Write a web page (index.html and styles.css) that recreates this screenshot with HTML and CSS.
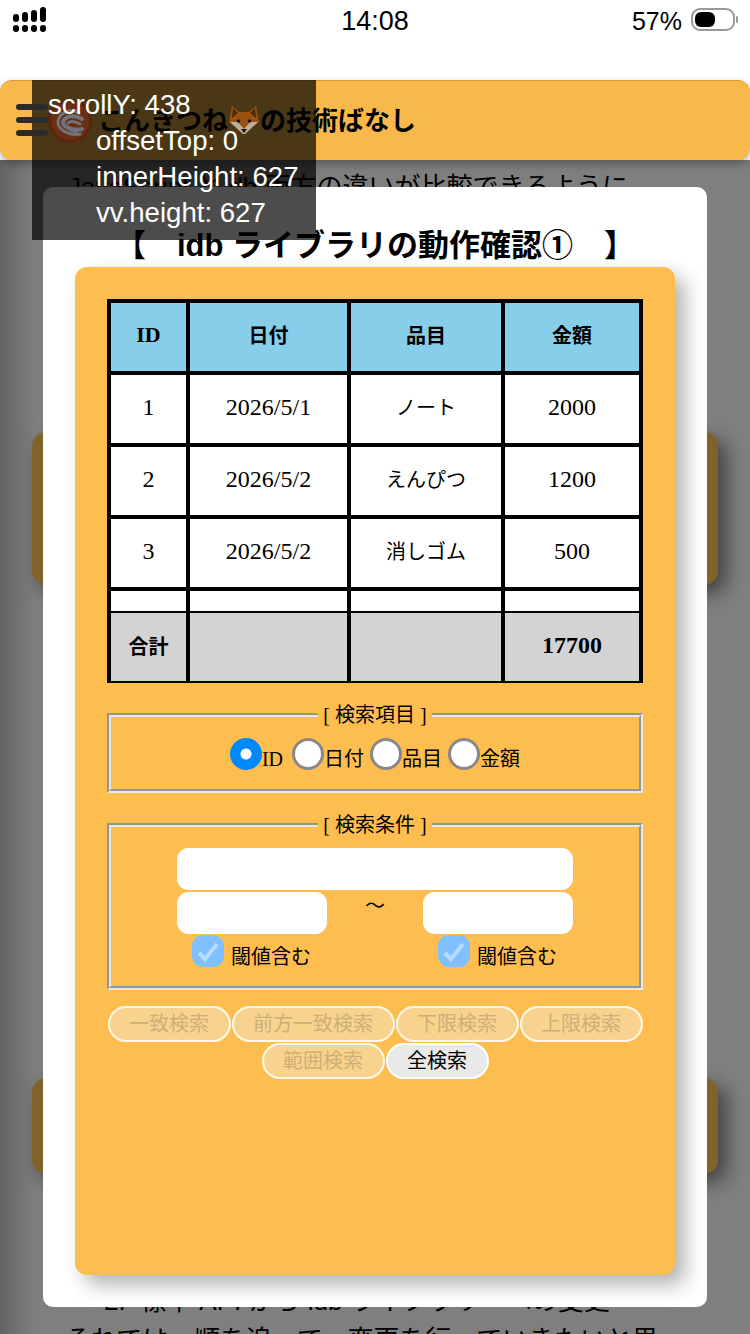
FILE: index.html
```html
<!DOCTYPE html>
<html lang="ja">
<head>
    <meta charset="UTF-8">
    <meta name="viewport" content="width=device-width, initial-scale=1.0">
    <title>idb ライブラリの動作確認</title>
    <link rel="stylesheet" href="styles.css">
</head>
<body>

    <!-- Status bar -->
    <div class="status-bar">
        <svg class="signal" width="34" height="26" viewBox="0 0 34 26">
            <rect x="0" y="8" width="6" height="8" rx="3"/>
            <rect x="9" y="6" width="6" height="10" rx="3"/>
            <rect x="18" y="4" width="6" height="12" rx="3"/>
            <rect x="27" y="1" width="6" height="15" rx="3"/>
            <rect x="0" y="19" width="6" height="7" rx="3"/>
            <rect x="9" y="19" width="6" height="7" rx="3"/>
            <rect x="18" y="19" width="6" height="7" rx="3"/>
            <rect x="27" y="19" width="6" height="7" rx="3"/>
        </svg>
        <span class="clock">14:08</span>
        <div class="battery-wrap">
            <span class="percent">57%</span>
            <svg width="48" height="26" viewBox="0 0 48 26">
                <rect x="1" y="2" width="42" height="21" rx="8" fill="none" stroke="#999" stroke-width="2"/>
                <rect x="4" y="5" width="20" height="15" rx="6" fill="#000"/>
                <rect x="45" y="9" width="2" height="7" rx="1" fill="#999"/>
            </svg>
        </div>
    </div>

    <!-- Site header -->
    <header class="site-header">
        <button class="menu-btn" aria-label="menu">
            <span></span>
            <span></span>
            <span></span>
        </button>
        <svg class="site-logo" width="44" height="44" viewBox="0 0 44 44">
            <circle cx="22" cy="22" r="22" fill="#5a2610"/>
            <circle cx="22" cy="22" r="19" fill="#6c2f13"/>
            <g fill="none" stroke="#70727c" stroke-linecap="round">
                <path d="M31 14 C23 9 12 13 10 22 C9 30 20 37 32 35" stroke-width="3"/>
                <path d="M34 20 C27 15 17 17 15 23 C15 28 24 32 34 30" stroke-width="4"/>
                <path d="M32 25 C27 22 22 22 20 24" stroke-width="3"/>
                <path d="M18 28 C21 32 26 33 29 33" stroke-width="2"/>
            </g>
        </svg>
        <h2 class="site-title">こんきつね<svg class="fox" width="32" height="32" viewBox="0 0 32 32">
            <path d="M4 1 L11 7 H21 L28 1 L31 17 L17 29 H15 L1 17 Z" fill="#9c500f"/>
            <path d="M5 3 L10 8 L4 13 Z M27 3 L22 8 L28 13 Z" fill="#50290a"/>
            <path d="M2 17 L10 17 L16 24 L22 17 L30 17 L17 29 H15 Z" fill="#bcae98"/>
            <circle cx="10.500" cy="16" r="1.800" fill="#111"/>
            <circle cx="21.500" cy="16" r="1.800" fill="#111"/>
            <path d="M13 24 H19 L16 28 Z" fill="#111"/>
        </svg>の技術ばなし</h2>
    </header>

    <!-- Page behind the dialog -->
    <main class="content">
        <p class="article-text">JavaScript とidb 両方の違いが比較できるように</p>
        <div class="article-card card-first"></div>
        <div class="article-card card-second"></div>
        <p class="article-text step-title">2.&nbsp; 標準 API から idb ライブラリーへの変更</p>
        <p class="article-text step-body">それでは、順を追って、変更を行っていきたいと思</p>

        <div class="backdrop"></div>

        <section class="modal">
            <h1 class="modal-title">【　idb ライブラリの動作確認①　】</h1>

            <div class="panel">
                <table class="data-table">
                    <thead>
                        <tr>
                            <th class="col-id">ID</th>
                            <th class="col-date">日付</th>
                            <th class="col-item">品目</th>
                            <th class="col-price">金額</th>
                        </tr>
                    </thead>
                    <tbody>
                        <tr>
                            <td class="num">1</td>
                            <td class="num">2026/5/1</td>
                            <td>ノート</td>
                            <td class="num">2000</td>
                        </tr>
                        <tr>
                            <td class="num">2</td>
                            <td class="num">2026/5/2</td>
                            <td>えんぴつ</td>
                            <td class="num">1200</td>
                        </tr>
                        <tr>
                            <td class="num">3</td>
                            <td class="num">2026/5/2</td>
                            <td>消しゴム</td>
                            <td class="num">500</td>
                        </tr>
                        <tr class="row-clipped">
                            <td></td>
                            <td></td>
                            <td></td>
                            <td></td>
                        </tr>
                    </tbody>
                    <tfoot>
                        <tr>
                            <th>合計</th>
                            <th></th>
                            <th></th>
                            <th class="num">17700</th>
                        </tr>
                    </tfoot>
                </table>

                <fieldset class="search-box">
                    <legend>[ 検索項目 ]</legend>
                    <div class="radio-row">
                        <label class="radio-label id-label"><input type="radio" name="field" checked>ID</label>
                        <label class="radio-label"><input type="radio" name="field">日付</label>
                        <label class="radio-label"><input type="radio" name="field">品目</label>
                        <label class="radio-label"><input type="radio" name="field">金額</label>
                    </div>
                </fieldset>

                <fieldset class="search-box">
                    <legend>[ 検索条件 ]</legend>
                    <div class="condition">
                        <input type="text" class="text-input">
                        <div class="range-row">
                            <input type="text" class="text-input">
                            <span class="tilde">〜</span>
                            <input type="text" class="text-input">
                        </div>
                        <div class="range-row">
                            <label class="threshold">
                                <svg class="check" width="32" height="32" viewBox="0 0 32 32">
                                    <rect width="32" height="32" rx="11" fill="#80c0ff"/>
                                    <path d="M7 18 L13 24 L25 9" fill="none" stroke="#b8dcff" stroke-width="4"/>
                                </svg>
                                閾値含む
                            </label>
                            <label class="threshold">
                                <svg class="check" width="32" height="32" viewBox="0 0 32 32">
                                    <rect width="32" height="32" rx="11" fill="#80c0ff"/>
                                    <path d="M7 18 L13 24 L25 9" fill="none" stroke="#b8dcff" stroke-width="4"/>
                                </svg>
                                閾値含む
                            </label>
                        </div>
                    </div>
                </fieldset>

                <div class="button-row">
                    <button class="search-btn" disabled>一致検索</button>
                    <button class="search-btn" disabled>前方一致検索</button>
                    <button class="search-btn" disabled>下限検索</button>
                    <button class="search-btn" disabled>上限検索</button>
                    <button class="search-btn" disabled>範囲検索</button>
                    <button class="search-btn">全検索</button>
                </div>
            </div>
        </section>
    </main>

    <!-- Debug readout lies over everything -->
    <div class="debug">
        <div class="debug-text">scrollY: 438</div>
        <div class="debug-text debug-line">offsetTop: 0</div>
        <div class="debug-text debug-line">innerHeight: 627</div>
        <div class="debug-text debug-line">vv.height: 627</div>
    </div>

</body>
</html>
```

FILE: styles.css
```css
/* General Styles */
* {
    margin: 0;
    padding: 0;
    box-sizing: border-box;
}

body {
    position: relative;
    width: 750px;
    height: 1334px;
    overflow: hidden;
    background: #fff;
    font-family: "Liberation Sans", "Noto Sans CJK JP", sans-serif;
    color: #000;
}

/* Status bar */
.status-bar {
    height: 80px;
    display: grid;
    grid-template-columns: 1fr auto 1fr;
    align-items: start;
    padding: 6px 13px 0;
}

.signal {
    display: block;
}

.clock {
    font-size: 27px;
    line-height: 30px;
}

.percent {
    font-size: 25px;
    line-height: 30px;
}

.battery-wrap {
    display: flex;
    justify-content: flex-end;
    gap: 9px;
    margin-right: -2px;
}

.battery-wrap svg {
    margin-top: 1px;
}

/* Site header */
.site-header {
    position: relative;
    height: 80px;
    display: flex;
    align-items: center;
    gap: 6px;
    padding-left: 48px;
    background: #f8b94a;
    border-top: 1px solid #dc9c34;
    border-radius: 12px;
    box-shadow: 0 4px 10px rgba(0, 0, 0, 0.3);
}

.site-logo {
    position: relative;
    z-index: 5;
}

.site-title {
    display: flex;
    align-items: center;
    font-size: 26px;
    font-weight: bold;
    line-height: 36px;
}

.fox {
    position: relative;
    z-index: 5;
    flex: none;
}

.menu-btn {
    position: absolute;
    z-index: 5;
    top: 23px;
    left: 16px;
    width: 32px;
    display: flex;
    flex-direction: column;
    gap: 7px;
    background: none;
    border: none;
}

.menu-btn span {
    display: block;
    height: 6px;
    background: #2b2b2b;
    border-radius: 3px;
}

/* Page behind the dialog */
.content {
    position: relative;
    z-index: -1;
    height: 1174px;
    overflow: hidden;
    padding: 8px 32px 0;
    background: linear-gradient(90deg, #c8c8c8 0, #fff 36px);
}

.article-text {
    font-size: 26px;
    line-height: 39px;
    padding-left: 36px;
    white-space: nowrap;
}

.step-title {
    margin-top: 108px;
    padding-left: 72px;
}

.step-body {
    padding-left: 33px;
}

.article-card {
    background: #ffc654;
    border-radius: 14px;
    box-shadow: 8px 8px 20px rgba(0, 0, 0, 0.5);
}

.card-first {
    height: 153px;
    margin-top: 225px;
}

.card-second {
    height: 96px;
    margin-top: 493px;
}

.backdrop {
    position: absolute;
    inset: 0;
    background: rgba(0, 0, 0, 0.5);
}

/* Dialog */
.modal {
    position: absolute;
    top: 27px;
    left: 43px;
    width: 664px;
    height: 1120px;
    padding: 0 32px;
    background: #fff;
    border-radius: 10px;
}

.modal-title {
    height: 80px;
    padding-top: 44px;
    font-size: 31px;
    line-height: 30px;
    font-weight: bold;
    text-align: center;
    white-space: nowrap;
}

.panel {
    height: 1008px;
    padding: 32px;
    background: #febe4f;
    border-radius: 12px;
    box-shadow: 10px 10px 20px rgba(0, 0, 0, 0.3);
    font-family: "Liberation Serif", "Noto Sans CJK JP", serif;
    font-size: 20px;
}

/* Table */
.data-table {
    width: 536px;
    table-layout: fixed;
    border-collapse: separate;
    border-spacing: 0;
    border: 4px solid #000;
    border-bottom-width: 2px;
    background: #fff;
}

.data-table th, .data-table td {
    height: 72px;
    padding-bottom: 5px;
    border-right: 4px solid #000;
    border-bottom: 4px solid #000;
    text-align: center;
    font-size: 20px;
}

.data-table tr > :last-child {
    border-right: none;
}

.data-table .num {
    padding-bottom: 3px;
    font-size: 24px;
}

.data-table thead th {
    background: #87ceeb;
}

.data-table thead .col-id {
    font-size: 22px;
}

.data-table tfoot th {
    height: 68px;
    padding-bottom: 4px;
    background: #d3d3d3;
    border-bottom: none;
}

.data-table .row-clipped td {
    height: 22px;
    padding-bottom: 0;
    border-bottom-width: 2px;
}

.col-id {
    width: 79px;
}

.col-date {
    width: 161px;
}

.col-item {
    width: 154px;
}

.col-price {
    width: 134px;
}

/* Search boxes */
.search-box {
    margin-top: 20px;
    border: 4px groove #e8e8e8;
    text-align: center;
}

.search-box legend {
    margin: 0 auto;
    padding: 0 5px;
    line-height: 24px;
}

.radio-row {
    display: flex;
    justify-content: center;
    gap: 6px;
    padding: 11px 0 19px;
}

.radio-label {
    display: flex;
    align-items: flex-end;
    line-height: 22px;
}

.id-label {
    padding-right: 3px;
}

.radio-label input {
    appearance: none;
    width: 32px;
    height: 32px;
    background: #fff;
    border: 3px solid #888;
    border-radius: 50%;
}

.radio-label input:checked {
    background: radial-gradient(circle, #fff 5px, #0088ff 6px);
    border-color: #0088ff;
}

.condition {
    width: 396px;
    margin: 0 auto;
    padding: 11px 0 19px;
    display: flex;
    flex-direction: column;
    gap: 2px;
}

.text-input {
    width: 100%;
    height: 42px;
    background: #fff;
    border: 1px solid #fff;
    border-radius: 11px;
}

.range-row {
    display: flex;
    justify-content: space-between;
}

.range-row .text-input {
    width: 150px;
}

.tilde {
    line-height: 28px;
}

.threshold {
    width: 150px;
    display: flex;
    align-items: flex-end;
    gap: 7px;
    padding-left: 15px;
    margin-top: -1px;
    line-height: 20px;
    white-space: nowrap;
}

.check {
    flex: none;
}

/* Buttons */
.button-row {
    margin-top: 16px;
    display: flex;
    flex-wrap: wrap;
    justify-content: center;
    gap: 1px;
}

.search-btn {
    height: 36px;
    padding: 0 19.5px 4px;
    font-family: inherit;
    font-size: 20px;
    color: #000;
    background: #e9e9e9;
    border: 2px solid #fff;
    border-radius: 18px;
}

.search-btn:disabled {
    color: #cdb078;
    background: #f7d38d;
    border-color: #fff8ea;
}

/* Debug readout */
.debug {
    position: absolute;
    top: 80px;
    left: 32px;
    width: 284px;
    height: 160px;
    padding: 7px 16px 0;
    background: rgba(0, 0, 0, 0.7);
    color: #fff;
    font-size: 27.6px;
    line-height: 36px;
    white-space: nowrap;
}

.debug-text {
    position: relative;
    z-index: 10;
}

.debug-line {
    padding-left: 48px;
}
```
